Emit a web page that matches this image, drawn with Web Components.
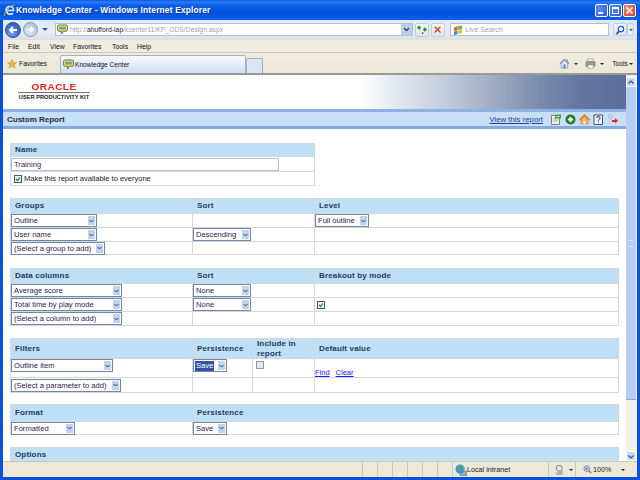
<!DOCTYPE html>
<html>
<head>
<meta charset="utf-8">
<title>Knowledge Center</title>
<style>
  html, body { margin: 0; padding: 0; width: 640px; height: 480px; overflow: hidden; background: #0a50d8; }
  body { font-family: "Liberation Sans", Arial, sans-serif; }
</style>
</head>
<body>
<ie-window>
  <title-bar slot="title">Knowledge Center - Windows Internet Explorer</title-bar>
  <nav-bar slot="nav"></nav-bar>
  <menu-bar slot="menu"></menu-bar>
  <tab-bar slot="tabs"></tab-bar>
  <report-page slot="page">
    <report-table cols="182px 1fr" rows="13px 15px 14px" style="width:305px;margin-top:14px">
      <report-cell head span="2">Name</report-cell>
      <report-cell span="2" flush><text-box style="width:268px">Training</text-box></report-cell>
      <report-cell span="2" flush><check-box checked style="margin:0 2px 0 3px"></check-box>Make this report available to everyone</report-cell>
    </report-table>

    <report-table cols="182px 122px 1fr" rows="15px 14px 14px 13px" style="margin-top:12px">
      <report-cell head>Groups</report-cell><report-cell head>Sort</report-cell><report-cell head>Level</report-cell>
      <report-cell flush><report-select w="86">Outline</report-select></report-cell><report-cell></report-cell><report-cell flush><report-select w="54">Full outline</report-select></report-cell>
      <report-cell flush><report-select w="86">User name</report-select></report-cell><report-cell flush><report-select w="58">Descending</report-select></report-cell><report-cell></report-cell>
      <report-cell flush><report-select w="94">(Select a group to add)</report-select></report-cell><report-cell></report-cell><report-cell></report-cell>
    </report-table>

    <report-table cols="182px 122px 1fr" rows="15px 14px 14px 14px" style="margin-top:13px">
      <report-cell head>Data columns</report-cell><report-cell head>Sort</report-cell><report-cell head>Breakout by mode</report-cell>
      <report-cell flush><report-select w="111">Average score</report-select></report-cell><report-cell flush><report-select w="58">None</report-select></report-cell><report-cell></report-cell>
      <report-cell flush><report-select w="111">Total time by play mode</report-select></report-cell><report-cell flush><report-select w="58">None</report-select></report-cell><report-cell flush><check-box checked style="margin-left:2px"></check-box></report-cell>
      <report-cell flush><report-select w="111">(Select a column to add)</report-select></report-cell><report-cell></report-cell><report-cell></report-cell>
    </report-table>

    <report-table cols="182px 60px 62px 1fr" rows="20px 19px 15px" style="margin-top:12px">
      <report-cell head>Filters</report-cell><report-cell head>Persistence</report-cell><report-cell head>Include in report</report-cell><report-cell head>Default value</report-cell>
      <report-cell flush top><report-select w="102">Outline item</report-select></report-cell><report-cell flush top><report-select w="34" selected>Save</report-select></report-cell><report-cell flush top><check-box style="margin:2px 0 0 3px"></check-box></report-cell><report-cell flush bottom><a-link>Find</a-link><a-link style="margin-left:6px">Clear</a-link></report-cell>
      <report-cell flush><report-select w="110">(Select a parameter to add)</report-select></report-cell><report-cell></report-cell><report-cell></report-cell><report-cell></report-cell>
    </report-table>

    <report-table cols="182px 1fr" rows="17px 13px" style="margin-top:11px">
      <report-cell head>Format</report-cell><report-cell head>Persistence</report-cell>
      <report-cell flush><report-select w="64">Formatted</report-select></report-cell><report-cell flush><report-select w="34">Save</report-select></report-cell>
    </report-table>

    <report-table cols="1fr" rows="15px" style="margin-top:12px">
      <report-cell head>Options</report-cell>
    </report-table>
  </report-page>
  <scroll-bar slot="scroll"></scroll-bar>
  <status-bar slot="status"></status-bar>
</ie-window>

<script>
// icons shared by the chrome and the report toolbar
const ICONS = {
  ie: '<path d="M3 7c0-3 2-4.500 4-4.500S10.500 4 10.500 6.500H4.500" fill="none" stroke="#d4ecff" stroke-width="1.500"/><path d="M9.800 9c-1 1.500-4.800 2-5.800-.5C3.500 7 3.500 6 4 5" fill="none" stroke="#fff" stroke-width="1.500"/><path d="M1 12C2 7 7 1.500 11.500 1" fill="none" stroke="#f0b030" stroke-width="1"/>',
  bubble: '<path d="M2.500 1h7A2 2 0 0 1 11.500 3v3A2 2 0 0 1 9.500 8H7L5 11V8H2.500A2 2 0 0 1 .5 6V3A2 2 0 0 1 2.500 1z" fill="#f7d33a" stroke="#34545a" stroke-width=".8"/><path d="M2.500 3h7v3h-7z" fill="#5aa8b8"/>',
  star: '<path d="M5.500.5 7 4h3.600L7.700 6.200 8.800 10 5.500 7.800 2.200 10l1.100-3.800L.4 4H4z" fill="#f5b52e" stroke="#b9812a" stroke-width=".5"/>',
  go: '<path d="M1 4h3.500M3 2 1 4l2 2" fill="none" stroke="#1f9a2c" stroke-width="1.500"/><path d="M10 6H6.500M8 4l2 2-2 2" fill="none" stroke="#1f9a2c" stroke-width="1.500"/><path d="M6.500 9 6 11" stroke="#1f9a2c" stroke-width="1.500"/>',
  stop: '<path d="M2 2l7 7M9 2l-7 7" stroke="#c9402a" stroke-width="1.600"/>',
  flag: '<path d="M1 3 5 1.500v4L1 7z" fill="#e8552a"/><path d="M5.500 1.500 10 .5v4L5.500 5.500z" fill="#71b83a"/><path d="M1 7.500 5 6v4l-4 1.500z" fill="#3a8ee0"/><path d="M5.500 6 10 5v4l-4.500 1z" fill="#f3c02c"/>',
  lens: '<circle cx="6.500" cy="4.500" r="3" fill="#fff" stroke="#1f50c8" stroke-width="1.300"/><path d="M4.500 7 1.500 10" stroke="#1f50c8" stroke-width="1.800"/>',
  house: '<path d="M1 6 6 1.500 11 6" fill="none" stroke="#39507a" stroke-width="1"/><path d="M2.500 5.500v5.500h7V5.500L6 2.500z" fill="#dbe6f5" stroke="#5a7299" stroke-width=".6"/><path d="M5 7h2v4H5z" fill="#4d7bc0"/><path d="M8.500 1.500h1v2l-1-1z" fill="#5a7299"/>',
  printer: '<path d="M3 1h6v3H3z" fill="#f5f5f5" stroke="#666" stroke-width=".5"/><path d="M1 4h10v5H1z" fill="#9a9a9a" stroke="#666" stroke-width=".5"/><path d="M3 7.500h6V11H3z" fill="#fff" stroke="#666" stroke-width=".5"/>',
  report: '<path d="M.5 1.500h8v9h-8z" fill="#f2efe0" stroke="#555" stroke-width=".7"/><path d="M2 5h5M2 7h5" stroke="#888" stroke-width=".6"/><path d="M4 .5h6v4H4z" fill="#3aa83a"/><path d="M5.500 2.500h3" stroke="#fff" stroke-width=".8"/>',
  plus: '<circle cx="5.500" cy="5.500" r="5" fill="#1c7a1c"/><path d="M5.500 2.800v5.400M2.800 5.500h5.400" stroke="#fff" stroke-width="1.800"/>',
  home: '<path d="M.5 6 5.500 1l5 5" fill="none" stroke="#d97b1c" stroke-width="1.300"/><path d="M2 5.500V10h7V5.500L5.500 2.200z" fill="#f2b35a" stroke="#a8681c" stroke-width=".5"/><path d="M4.500 7h2v3h-2z" fill="#fff"/>',
  help: '<path d="M1 1h8.500v9.500H1z" fill="#eef2f8" stroke="#34425e" stroke-width=".9"/><path d="M3.800 4c.2-2.200 3.400-1.900 3.200 0C7 5.200 5.400 5.200 5.400 6.800M5.400 7.700v1" fill="none" stroke="#1a2a4a" stroke-width="1"/>',
  exit: '<circle cx="3.500" cy="2.500" r="2" fill="#c9d6ec" stroke="#8a9cc0" stroke-width=".5"/><path d="M1 10c0-3 1-5 2.500-5S6 6 6 7v3z" fill="#c9d6ec"/><path d="M5 6h3V4l3 2.800-3 2.800V8H5z" fill="#e02c1c"/>',
  globe: '<rect x="5" y="7" width="7" height="5" fill="#8ea8c8" stroke="#4c6a90" stroke-width=".5"/><circle cx="5" cy="5" r="4.500" fill="#3f8de0"/><path d="M2 3c2-1 3 0 3 1S3 6 3 7M6 1.500c1 1 3 1 3 3s-2 1-2 3" fill="none" stroke="#62b84a" stroke-width="1.300"/>',
  shield: '<circle cx="5" cy="4" r="3.500" fill="none" stroke="#8a94a0" stroke-width="1.300"/><path d="M3 6h6v6H3z" fill="#a8b0b8"/><path d="M.5 9l3 3" stroke="#6a8a70" stroke-width="1"/>',
  zoom: '<circle cx="4.500" cy="4.500" r="3.300" fill="#dbe8fa" stroke="#4a70b0" stroke-width="1"/><path d="M3 4.500h3M4.500 3v3" stroke="#2a50a0" stroke-width=".9"/><path d="M7 7l3 3" stroke="#b04a30" stroke-width="1.400"/>',
};

class SvgIcon extends HTMLElement {
  connectedCallback() {
    const w = this.getAttribute('w') || 11, h = this.getAttribute('h') || w;
    const n = this.getAttribute('n') || 12;
    this.attachShadow({ mode: 'open' }).innerHTML = `
      <style>:host { display: inline-flex; flex: none; } svg { display: block; }</style>
      <svg width="${w}" height="${h}" viewBox="0 0 ${n} ${n}">${ICONS[this.getAttribute('name')] || ''}</svg>`;
  }
}
customElements.define('svg-icon', SvgIcon);

const define = (tag, html) => customElements.define(tag, class extends HTMLElement {
  connectedCallback() { this.attachShadow({ mode: 'open' }).innerHTML = html; }
});

define('ie-window', `
  <style>
    :host { display: flex; flex-direction: column; width: 640px; height: 480px; background: #0a50d8; }
    .body { flex: 1; min-height: 0; display: flex; margin: 0 3px 0 3px; background: #fff; }
    .bottom { margin: 0 3px 3px 3px; }
    .chrome { margin: 0 3px; }
    ::slotted([slot=scroll]) { flex: none; }
  </style>
  <slot name="title"></slot>
  <div class="chrome"><slot name="nav"></slot><slot name="menu"></slot><slot name="tabs"></slot></div>
  <div class="body"><slot name="page"></slot><slot name="scroll"></slot></div>
  <div class="bottom"><slot name="status"></slot></div>`);

define('title-bar', `
  <style>
    :host { display: flex; align-items: center; height: 20px; flex: none; padding: 0 4px 0 3px; box-sizing: border-box;
      background: linear-gradient(180deg, #0a58e6 0%, #2a7cf5 10%, #0a5ce8 28%, #0553dc 70%, #0a60ee 100%);
      color: #fff; font: bold 8.4px "Liberation Sans", sans-serif; letter-spacing: .17px; text-shadow: 1px 1px 0 #0a3aa0; }
    .t { margin-left: 1px; flex: 1; }
    .b { width: 13px; height: 13px; margin-left: 1px; box-sizing: border-box; border: 1px solid #fff; border-radius: 2px;
      background: radial-gradient(circle at 30% 30%, #5f8df2, #2a58d8); position: relative; }
    .close { background: radial-gradient(circle at 30% 30%, #ec9078, #cf3c1c); }
    .min i { position: absolute; left: 2px; bottom: 2px; width: 5px; height: 2px; background: #fff; }
    .max i { position: absolute; left: 2px; top: 2px; right: 2px; bottom: 2px; border: 1px solid #fff; border-top-width: 2px; box-sizing: border-box; }
    svg { display: block; }
  </style>
  <svg-icon name="ie" w="12" h="12"></svg-icon>
  <span class="t"><slot></slot></span>
  <div class="b min"><i></i></div><div class="b max"><i></i></div>
  <div class="b close"><svg width="11" height="11" viewBox="0 0 11 11"><path d="M2.500 2.500l6 6M8.500 2.500l-6 6" stroke="#fff" stroke-width="1.500"/></svg></div>`);

define('nav-bar', `
  <style>
    :host { display: flex; align-items: center; height: 20px; box-sizing: border-box; padding: 0 0 1px 2px;
      background: linear-gradient(180deg, #dfe8f6, #e8edf4 60%, #d9dfe8); font: 6.800px "Liberation Sans", sans-serif; }
    .round { border-radius: 50%; flex: none; box-sizing: border-box; display: flex; align-items: center; justify-content: center; }
    .back { width: 16px; height: 16px; background: radial-gradient(circle at 40% 70%, #6fa0ee, #1e4aa8); border: 1px solid #2a4a90; }
    .fwd { width: 15px; height: 15px; margin-left: 2px; background: radial-gradient(circle at 40% 70%, #dfe8f5, #a5b6d2); border: 1px solid #8498b8; }
    .arrow { width: 0; height: 0; border: 3px solid transparent; border-top: 3px solid #2a5ca8; border-bottom: 0; margin: 0 7px 0 4px; flex: none; }
    .box { height: 13px; background: #fff; border: 1px solid #aebfd6; box-sizing: border-box; display: flex; align-items: center; }
    .addr { width: 358px; padding-left: 1px; color: #a4a4a4; }
    .addr b { font-weight: normal; color: #222; }
    .url { margin-left: 2px; flex: 1; }
    .drop { width: 11px; height: 100%; background: #bccdea; flex: none; display: flex; align-items: center; justify-content: center; }
    .tb { width: 14px; height: 14px; box-sizing: border-box; border: 1px solid #c8ccd0; border-radius: 2px; background: linear-gradient(#f8f8f8, #e0e4ea); margin-left: 2px; display: flex; align-items: center; justify-content: center; flex: none; }
    .search { width: 159px; margin-left: 5px; padding-left: 2px; color: #a6a6a6; font-size: 7.200px; }
    .search span { margin-left: 2px; }
    .sb { width: 14px; height: 13px; margin-left: 4px; border: 1px solid #c0cce0; border-radius: 2px; box-sizing: border-box; background: linear-gradient(#f4f8ff, #d8e4f6); display: flex; align-items: center; justify-content: center; flex: none; }
    .sd { width: 7px; height: 13px; border: 1px solid #c0cce0; box-sizing: border-box; border-radius: 2px; background: #e4ecf8; display: flex; align-items: center; justify-content: center; flex: none; }
    .sd i { width: 0; height: 0; border: 2px solid transparent; border-top: 2px solid #2a5ca8; border-bottom: 0; }
  </style>
  <div class="round back"><svg width="10" height="10" viewBox="0 0 10 10"><path d="M9 5H2M5 2 2 5l3 3" fill="none" stroke="#fff" stroke-width="1.800"/></svg></div>
  <div class="round fwd"><svg width="9" height="9" viewBox="0 0 10 10"><path d="M1 5h7M5 2l3 3-3 3" fill="none" stroke="#fff" stroke-width="1.800"/></svg></div>
  <i class="arrow"></i>
  <div class="box addr"><svg-icon name="bubble" w="11" h="11"></svg-icon><span class="url">http://<b>ahufford-lap</b>/kcenter11/KP_ODS/Design.aspx</span>
    <div class="drop"><svg width="7" height="5" viewBox="0 0 7 5"><path d="M1 1l2.500 2.500L6 1" fill="none" stroke="#2a3f6a" stroke-width="1.300"/></svg></div></div>
  <div class="tb"><svg-icon name="go" w="11" h="11"></svg-icon></div>
  <div class="tb"><svg-icon name="stop" w="10" h="10"></svg-icon></div>
  <div class="box search"><svg-icon name="flag" w="10" h="10" n="11"></svg-icon><span>Live Search</span></div>
  <div class="sb"><svg-icon name="lens" w="10" h="10" n="11"></svg-icon></div>
  <div class="sd"><i></i></div>`);

define('menu-bar', `
  <style>
    :host { display: flex; align-items: center; height: 13px; padding-left: 5px; gap: 8px; box-sizing: border-box;
      background: #efebdf; border-bottom: 1px solid #c9c8bf; font: 6.900px "Liberation Sans", sans-serif; color: #111; }
    span:nth-of-type(1) { width: 12px; } span:nth-of-type(2) { width: 14px; } span:nth-of-type(3) { width: 15px; }
    span:nth-of-type(4) { width: 31px; } span:nth-of-type(5) { width: 17px; }
  </style>
  <span>File</span><span>Edit</span><span>View</span><span>Favorites</span><span>Tools</span><span>Help</span>`);

define('tab-bar', `
  <style>
    :host { display: flex; align-items: flex-end; height: 22px; box-sizing: border-box; padding: 0 4px 0 4px;
      background: linear-gradient(#efebdf, #ebe8d8); border-bottom: 2px solid #9a9a92; font: 6.800px "Liberation Sans", sans-serif; color: #111; }
    .fav { display: flex; align-items: center; gap: 2px; width: 53px; height: 19px; }
    .tab { width: 186px; height: 18px; box-sizing: border-box; display: flex; align-items: center; gap: 1px; padding-left: 2px; font-size: 6.600px;
      background: linear-gradient(#f6f9fe, #cfdff5); border: 1px solid #a8b0bc; border-bottom: 0; border-radius: 2px 2px 0 0; }
    .new { width: 17px; height: 15px; box-sizing: border-box; background: #dbe4f5; border: 1px solid #a8b0bc; border-bottom: 0; border-radius: 2px 2px 0 0; }
    .sp { flex: 1; }
    .tools { display: flex; align-items: center; height: 19px; }
    .a { width: 0; height: 0; border: 2px solid transparent; border-top: 2px solid #222; border-bottom: 0; margin: 0 7px 0 4px; }
  </style>
  <div class="fav"><svg-icon name="star" w="10" h="10" n="11"></svg-icon>Favorites</div>
  <div class="tab"><svg-icon name="bubble" w="11" h="11"></svg-icon>Knowledge Center</div>
  <div class="new"></div>
  <div class="sp"></div>
  <div class="tools"><svg-icon name="house" w="11" h="11"></svg-icon><i class="a"></i><svg-icon name="printer" w="11" h="11"></svg-icon><i class="a" style="margin-right:8px"></i>Tools<i class="a" style="margin:0 0 0 1px"></i></div>`);

define('report-page', `
  <style>
    :host { display: block; flex: 1; min-width: 0; height: 100%; overflow: hidden; background: #fff; font: 7.500px "Liberation Sans", sans-serif; color: #20242c; }
    .head { height: 34px; display: flex; background: linear-gradient(90deg, #fff 0, #fff 357px, #e0e6ee 397px, #c0c8da 447px, #9aa8c0 497px, #7a8cae 537px, #5f749f 582px, #5a6f9c 622px); box-sizing: border-box; padding: 8px 0 0 15px; }
    .logo { width: 72px; text-align: center; }
    .oracle { color: #e0271c; font: bold 8.600px "Liberation Sans", sans-serif; line-height: 8px; padding-bottom: 1px; border-bottom: 1px solid #777; }
    .oracle span { display: inline-block; transform: scaleX(1.180); letter-spacing: .3px; }
    .upk { font: bold 5.700px "Liberation Sans", sans-serif; color: #222; line-height: 9px; white-space: nowrap; }
    .band { height: 14px; background: #c7dff7; border-top: 3px solid #8eb0e2; border-bottom: 3px solid #86a9e0; display: flex; align-items: center; padding: 0 8px 0 4px; }
    .band b { flex: 1; font: bold 8px "Liberation Sans", sans-serif; color: #1e2e42; }
    .band a { color: #2a3a9a; text-decoration: underline; margin-right: 8px; font-size: 7.800px; }
    .band svg-icon { margin-left: 3px; }
    .band svg-icon:nth-of-type(1) { margin-left: 0; }
    .main { padding: 0 7px 0 7px; }
  </style>
  <div class="head"><div class="logo"><div class="oracle"><span>ORACLE</span></div><div class="upk">USER PRODUCTIVITY KIT</div></div></div>
  <div class="band"><b>Custom Report</b><a>View this report</a>
    <svg-icon name="report" w="11" h="11" n="11"></svg-icon><svg-icon name="plus" w="11" h="11" n="11"></svg-icon><svg-icon name="home" w="11" h="11" n="11"></svg-icon><svg-icon name="help" w="11" h="11" n="11"></svg-icon><svg-icon name="exit" w="11" h="11" n="11"></svg-icon>
  </div>
  <div class="main"><slot></slot></div>`);

class ReportTable extends HTMLElement {
  connectedCallback() {
    this.attachShadow({ mode: 'open' }).innerHTML = `
      <style>
        :host { display: grid; box-sizing: border-box; border-top: 1px solid #d6d6d6; border-left: 1px solid #d6d6d6;
          grid-template-columns: ${this.getAttribute('cols')}; grid-template-rows: ${this.getAttribute('rows')}; }
      </style><slot></slot>`;
  }
}
customElements.define('report-table', ReportTable);

class ReportCell extends HTMLElement {
  connectedCallback() {
    const span = this.getAttribute('span');
    const align = this.hasAttribute('top') ? 'flex-start' : this.hasAttribute('bottom') ? 'flex-end' : 'center';
    this.attachShadow({ mode: 'open' }).innerHTML = `
      <style>
        :host { display: flex; align-items: ${align}; box-sizing: border-box; min-width: 0; min-height: 0; ${span ? `grid-column: span ${span};` : ''}
          border-right: 1px solid #d6d6d6; border-bottom: 1px solid #d6d6d6; white-space: nowrap; }
        :host([head]) { background: #bfdff6; color: #1f3a60; font: bold 8px "Liberation Sans", sans-serif; letter-spacing: .15px; padding: 0 4px; white-space: normal; line-height: 10px; }
      </style><slot></slot>`;
  }
}
customElements.define('report-cell', ReportCell);

class ReportSelect extends HTMLElement {
  connectedCallback() {
    this.attachShadow({ mode: 'open' }).innerHTML = `
      <style>
        :host { display: flex; flex: none; width: ${this.getAttribute('w')}px; height: 13px; box-sizing: border-box; border: 1px solid #7088a8; align-items: center; background: #fff; color: #2c1a4a; font-size: 7.600px; }
        .t { flex: 1; padding: 0 2px 0 2px; overflow: hidden; white-space: nowrap; }
        :host([selected]) .t { flex: none; margin-left: 1px; padding: 1px 1px; background: #2f52a8; color: #fff; line-height: 8px; }
        :host([selected]) .gap { flex: 1; }
        .b { width: 7px; height: 9px; margin-right: 1px; background: #c1d2ee; display: flex; align-items: center; justify-content: center; flex: none; }
        svg { display: block; }
      </style>
      <span class="t"><slot></slot></span><span class="gap"></span>
      <span class="b"><svg width="5" height="4" viewBox="0 0 5 4"><path d="M.5 1 2.500 3 4.500 1" fill="none" stroke="#2a3f6a" stroke-width="1"/></svg></span>`;
  }
}
customElements.define('report-select', ReportSelect);

define('text-box', `
  <style>:host { display: flex; align-items: center; height: 13px; box-sizing: border-box; border: 1px solid #b4c2d4; padding-left: 2px; color: #4a2060; font-size: 7.600px; background: #fff; }</style><slot></slot>`);

define('a-link', `<style>:host { color: #1a1aff; text-decoration: underline; line-height: 9px; display: inline-block; margin-left: 0; }</style><slot></slot>`);

class CheckBox extends HTMLElement {
  connectedCallback() {
    const on = this.hasAttribute('checked');
    this.attachShadow({ mode: 'open' }).innerHTML = `
      <style>:host { display: inline-block; flex: none; width: 8px; height: 8px; } svg { display: block; }</style>
      <svg width="8" height="8" viewBox="0 0 8 8"><rect x=".5" y=".5" width="7" height="7" fill="${on ? '#f4f4ee' : '#e8e8e8'}" stroke="${on ? '#3a5a88' : '#8a9aae'}"/>${on ? '<path d="M2 4l1.500 1.500L6 2.500" fill="none" stroke="#21a121" stroke-width="1.200"/>' : ''}</svg>`;
  }
}
customElements.define('check-box', CheckBox);

define('scroll-bar', `
  <style>
    :host { display: flex; flex-direction: column; width: 11px; height: 100%; background: #f2f1e8; box-sizing: border-box; padding: 2px 1px 0 0; }
    .btn { height: 10px; flex: none; background: #c9d8f6; display: flex; align-items: center; justify-content: center; border-radius: 1px; border: 1px solid #fff; box-sizing: border-box; }
    .thumb { height: 313px; flex: none; background: #b9cdf4; border-bottom: 1px solid #8aa4dc; box-sizing: border-box; display: flex; align-items: center; justify-content: center; }
    .thumb i { width: 4px; height: 5px; border-top: 1px solid #d8e4fa; border-bottom: 1px solid #d8e4fa; }
    .sp { flex: 1; }
    svg { display: block; }
  </style>
  <div class="btn"><svg width="6" height="5" viewBox="0 0 6 5"><path d="M.5 3.500 3 1l2.500 2.500" fill="none" stroke="#3a4f7a" stroke-width="1.200"/></svg></div>
  <div class="thumb"><i></i></div><div class="sp"></div>
  <div class="btn"><svg width="6" height="5" viewBox="0 0 6 5"><path d="M.5 1.500 3 4l2.500-2.500" fill="none" stroke="#3a4f7a" stroke-width="1.200"/></svg></div>`);

define('status-bar', `
  <style>
    :host { display: flex; align-items: center; height: 16px; box-sizing: border-box; background: #ece9d8; border-top: 1px solid #c9c6b6; font: 7.200px "Liberation Sans", sans-serif; color: #222; }
    .msg { width: 359px; flex: none; align-self: stretch; }
    .s { width: 15px; height: 100%; flex: none; border-left: 1px solid #c9c6b6; box-sizing: border-box; }
    .zone { width: 96px; flex: none; height: 100%; display: flex; align-items: center; padding-left: 2px; border-left: 1px solid #c9c6b6; box-sizing: border-box; }
    .prot { width: 27px; flex: none; height: 100%; display: flex; align-items: center; gap: 4px; padding-left: 6px; border-left: 1px solid #c9c6b6; box-sizing: border-box; }
    .zm { flex: 1; height: 100%; display: flex; align-items: center; gap: 1px; padding-left: 7px; border-left: 1px solid #c9c6b6; box-sizing: border-box; }
    .a { width: 0; height: 0; border: 2px solid transparent; border-top: 2px solid #222; border-bottom: 0; }
    .grip { margin-left: auto; width: 5px; height: 6px; align-self: flex-end; margin-bottom: 1px; background: radial-gradient(circle, #a8a698 40%, transparent 45%) 0 0 / 2px 2px; }
  </style>
  <div class="msg"></div><div class="s"></div><div class="s"></div><div class="s"></div><div class="s"></div><div class="s"></div><div class="s"></div>
  <div class="zone"><svg-icon name="globe" w="12" h="12" n="12"></svg-icon>Local intranet</div>
  <div class="prot"><svg-icon name="shield" w="10" h="10" n="12"></svg-icon><i class="a"></i></div>
  <div class="zm"><svg-icon name="zoom" w="9" h="9" n="11"></svg-icon>100%<i class="a" style="margin-left:9px"></i><i class="grip"></i></div>`);
</script>
</body>
</html>
